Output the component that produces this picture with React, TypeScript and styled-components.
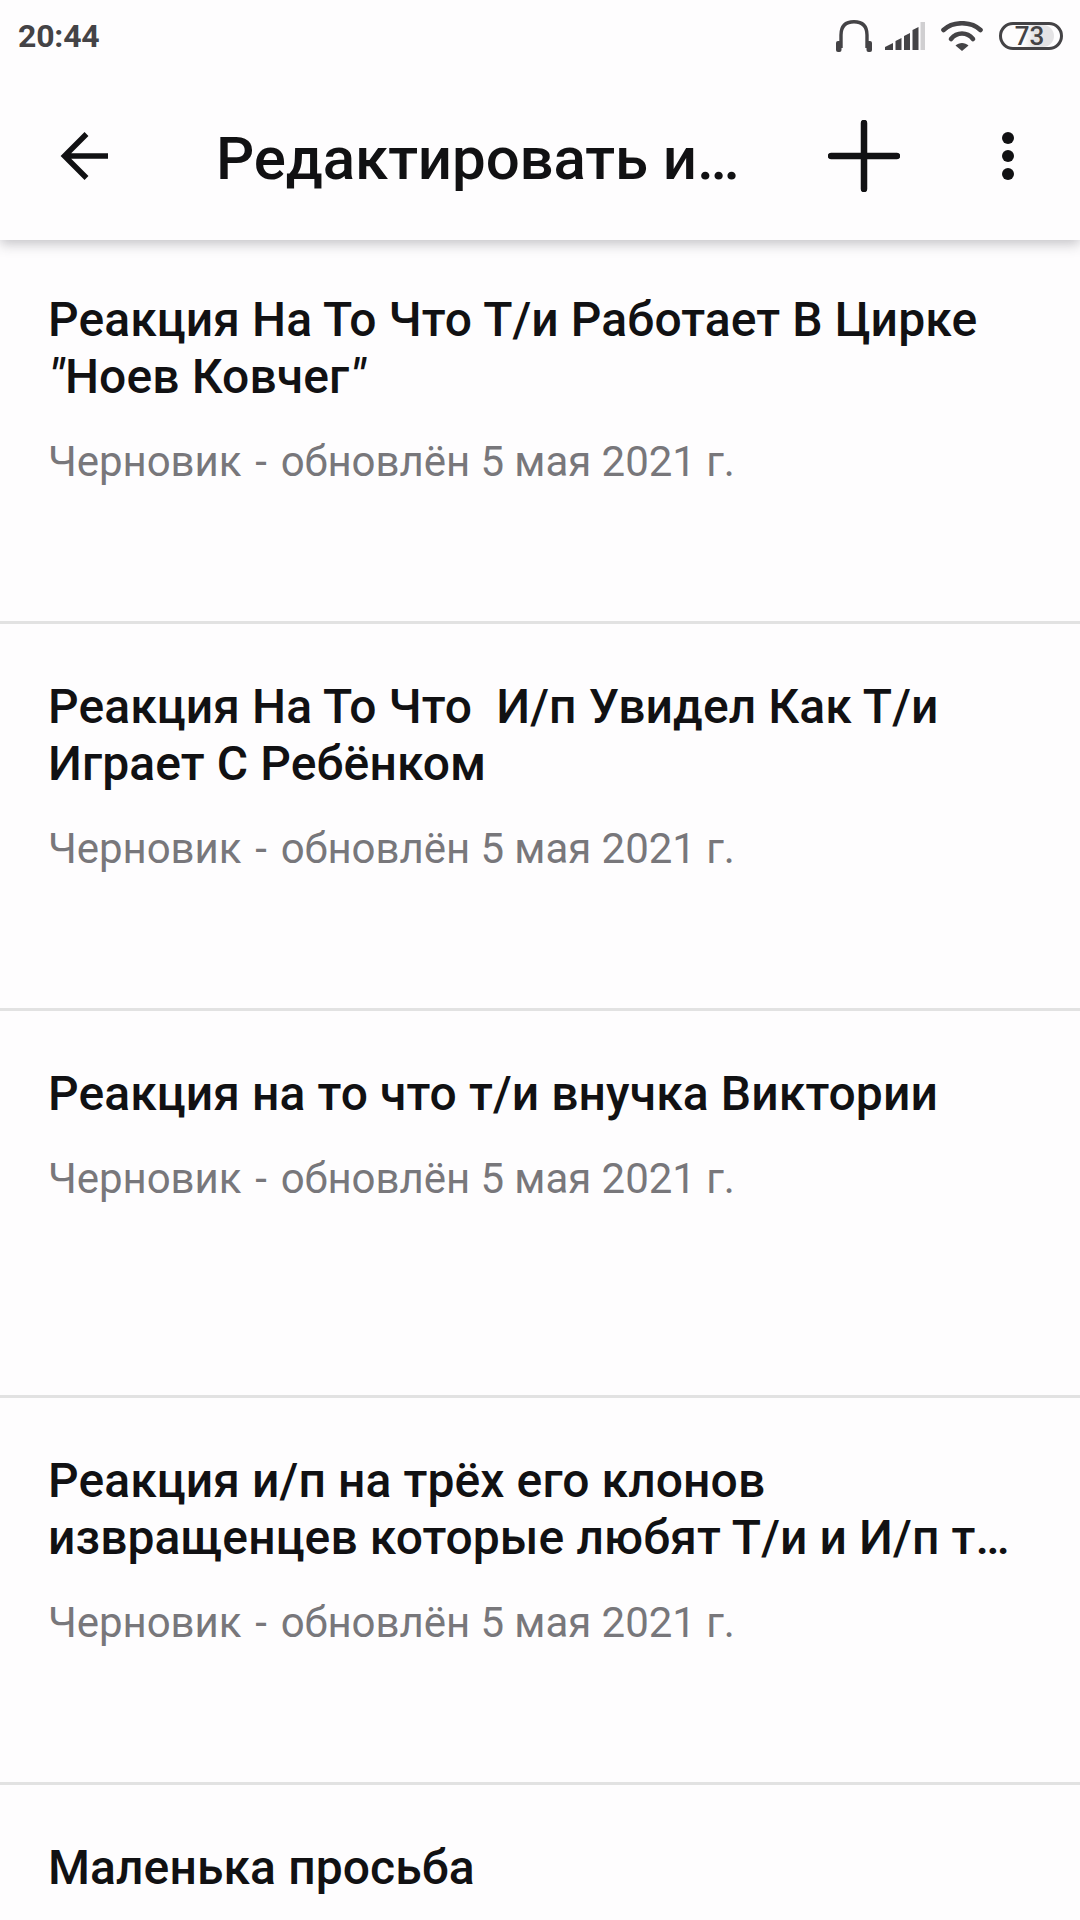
import React from "react";
import styled, { createGlobalStyle } from "styled-components";

const GlobalStyle = createGlobalStyle`
  html, body {
    margin: 0;
    padding: 0;
    background: #fefdfe;
  }
  body {
    font-family: Roboto, "Noto Sans", sans-serif;
  }
`;

const Screen = styled.div`
  width: 1080px;
  height: 1920px;
  overflow: hidden;
  background: #fefdfe;
  display: flex;
  flex-direction: column;
`;

// Status bar

const StatusBar = styled.div`
  height: 72px;
  flex: none;
  display: flex;
  align-items: center;
  justify-content: space-between;
  padding: 0 17px 0 18px;
`;

const Clock = styled.span`
  font-size: 32px;
  letter-spacing: -0.2px;
  font-weight: 700;
  color: #444346;
`;

const StatusIcons = styled.div`
  display: flex;
  align-items: center;
`;

const StatusSvg = styled.svg<{ $gap?: number }>`
  display: block;
  margin-left: ${(props) => props.$gap ?? 0}px;
`;

const Battery = styled.div`
  position: relative;
  margin-left: 16px;
  width: 64px;
  height: 28px;
  box-sizing: border-box;
  border: 3px solid #444346;
  border-radius: 14px;
  overflow: hidden;
  display: flex;
  align-items: center;
  justify-content: center;
  padding-right: 3px;
`;

const BatteryFill = styled.div`
  position: absolute;
  left: 0;
  top: 0;
  bottom: 0;
  width: 90%;
  background: linear-gradient(90deg, transparent 42%, #e4e3e5 62%);
  border-radius: 0 11px 11px 0;
`;

const BatteryLevel = styled.span`
  position: relative;
  font-size: 26px;
  font-weight: 500;
  line-height: 22px;
  color: #444346;
`;

// Toolbar

const Toolbar = styled.header`
  height: 168px;
  flex: none;
  position: relative;
  z-index: 1;
  display: flex;
  align-items: center;
  background: #fefdfe;
  box-shadow: 0 4px 12px rgba(70, 70, 80, 0.32);
  clip-path: inset(0 0 -30px 0);
`;

const ToolbarButton = styled.div<{ $width: number }>`
  width: ${(props) => props.$width}px;
  flex: none;
  display: flex;
  align-items: center;
  justify-content: center;
`;

const ToolbarTitle = styled.h1`
  margin: 0;
  flex: 1;
  padding: 4px 0 0 48px;
  font-size: 60px;
  letter-spacing: -0.1px;
  font-weight: 500;
  color: #111113;
  white-space: nowrap;
`;

// Story list

const StoryList = styled.main`
  flex: 1;
  margin-top: -3px;
  display: flex;
  flex-direction: column;
`;

const StoryRow = styled.article`
  height: 387px;
  flex: none;
  box-sizing: border-box;
  padding: 54px 48px 0;
  border-bottom: 3px solid #e2e2e2;
`;

const StoryTitle = styled.div`
  font-size: 48px;
  letter-spacing: 0.1px;
  font-weight: 500;
  line-height: 57px;
  color: #111113;
  white-space: pre-wrap;
`;

const Quote = styled.span`
  font-style: italic;
  padding: 0 1px;
`;

const StoryMeta = styled.div`
  margin-top: 31px;
  font-size: 42px;
  line-height: 52px;
  letter-spacing: -0.05px;
  color: #78777b;
`;

const MetaDash = styled.span`
  padding: 0 3.5px;
`;

const stories: { id: number; title: React.ReactNode; meta: boolean }[] = [
  {
    id: 1,
    title: (
      <>
        {"Реакция На То Что Т/и Работает В Цирке\n"}
        <Quote>"</Quote>Ноев Ковчег<Quote>"</Quote>
      </>
    ),
    meta: true,
  },
  { id: 2, title: "Реакция На То Что  И/п Увидел Как Т/и\nИграет С Ребёнком", meta: true },
  { id: 3, title: "Реакция на то что т/и внучка Виктории", meta: true },
  { id: 4, title: "Реакция и/п на трёх его клонов\nизвращенцев которые любят Т/и и И/п т…", meta: true },
  { id: 5, title: "Маленька просьба", meta: false },
];

export default function App() {
  return (
    <Screen>
      <GlobalStyle />
      <StatusBar>
        <Clock>20:44</Clock>
        <StatusIcons>
          <StatusSvg width="36" height="32" viewBox="0 0 36 32" fill="none">
            <path d="M5 28V15C5 6 10 1.7 18 1.7S31 6 31 15v13" stroke="#444346" strokeWidth="3.4" />
            <rect x="0" y="21" width="5.5" height="11" rx="2" fill="#444346" />
            <rect x="30.5" y="21" width="5.5" height="11" rx="2" fill="#444346" />
          </StatusSvg>
          <StatusSvg $gap={13} width="40" height="28" viewBox="0 0 40 28">
            <path d="M0 28V25L8 21V28z" fill="#444346" />
            <path d="M10.5 28V19L16.5 16V28z" fill="#444346" />
            <path d="M19 28V14L25 11V28z" fill="#444346" />
            <path d="M27.5 28V8L33.5 5V28z" fill="#444346" />
            <rect x="35.5" y="0" width="4.5" height="28" fill="#d0cfd1" />
          </StatusSvg>
          <StatusSvg $gap={16} width="42" height="30" viewBox="0 0 42 30" fill="none">
            <path d="M2.5 9C12 0 30 0 39.5 9" stroke="#444346" strokeWidth="4.6" strokeLinecap="round" />
            <path d="M10 18C16 10.7 26 10.7 32 18" stroke="#444346" strokeWidth="4.6" strokeLinecap="round" />
            <path d="M14.5 24.5C18 21 24 21 27.5 24.5L21 30z" fill="#444346" />
          </StatusSvg>
          <Battery>
            <BatteryFill />
            <BatteryLevel>73</BatteryLevel>
          </Battery>
        </StatusIcons>
      </StatusBar>
      <Toolbar>
        <ToolbarButton $width={168}>
          <svg width="48" height="48" viewBox="0 0 48 48" fill="none">
            <path d="M48 24H4M26.5 2L4.5 24l22 22" stroke="#111113" strokeWidth="5.5" />
          </svg>
        </ToolbarButton>
        <ToolbarTitle>Редактировать и…</ToolbarTitle>
        <ToolbarButton $width={144}>
          <svg width="72" height="72" viewBox="0 0 72 72" fill="none">
            <path d="M36 3v66M3 36h66" stroke="#111113" strokeWidth="6.5" strokeLinecap="round" />
          </svg>
        </ToolbarButton>
        <ToolbarButton $width={144}>
          <svg width="12" height="48" viewBox="0 0 12 48" fill="#111113">
            <circle cx="6" cy="6" r="6" />
            <circle cx="6" cy="24" r="6" />
            <circle cx="6" cy="42" r="6" />
          </svg>
        </ToolbarButton>
      </Toolbar>
      <StoryList>
        {stories.map((story) => (
          <StoryRow key={story.id}>
            <StoryTitle>{story.title}</StoryTitle>
            {story.meta && (
              <StoryMeta>
                Черновик <MetaDash>-</MetaDash> обновлён 5 мая 2021 г.
              </StoryMeta>
            )}
          </StoryRow>
        ))}
      </StoryList>
    </Screen>
  );
}
